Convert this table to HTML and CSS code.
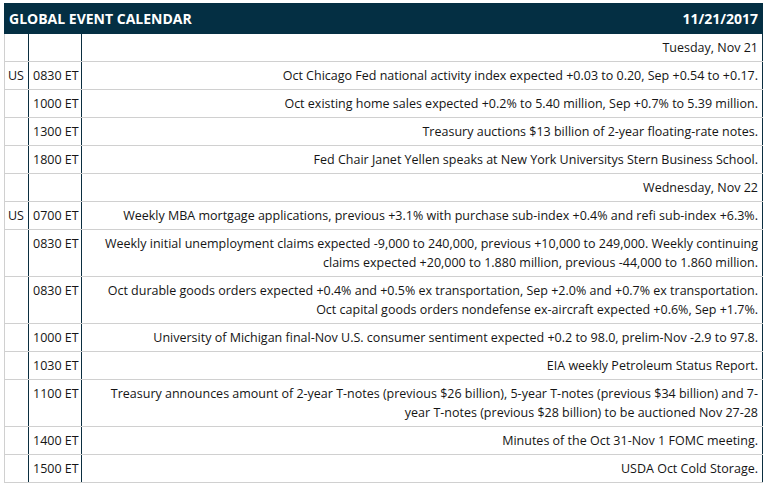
FILE: index.html
```html
<!DOCTYPE html>
<html>
<head>
<meta charset="utf-8">
<link rel="stylesheet" href="styles.css">
</head>
<body>
<div class="cal">
  <div class="cal-head">
    <span class="cal-title">GLOBAL EVENT CALENDAR</span>
    <span class="cal-date">11/21/2017</span>
  </div>
  <table class="cal-table">
    <colgroup><col class="c-country"><col class="c-time"><col class="c-event"></colgroup>
    <tr class="day"><td></td><td></td><td>Tuesday, Nov 21</td></tr>
    <tr><td>US</td><td>0830 ET</td><td>Oct Chicago Fed national activity index expected +0.03 to 0.20, Sep +0.54 to +0.17.</td></tr>
    <tr><td></td><td>1000 ET</td><td>Oct existing home sales expected +0.2% to 5.40 million, Sep +0.7% to 5.39 million.</td></tr>
    <tr><td></td><td>1300 ET</td><td>Treasury auctions $13 billion of 2-year floating-rate notes.</td></tr>
    <tr><td></td><td>1800 ET</td><td>Fed Chair Janet Yellen speaks at New York Universitys Stern Business School.</td></tr>
    <tr class="day"><td></td><td></td><td>Wednesday, Nov 22</td></tr>
    <tr><td>US</td><td>0700 ET</td><td>Weekly MBA mortgage applications, previous +3.1% with purchase sub-index +0.4% and refi sub-index +6.3%.</td></tr>
    <tr><td></td><td>0830 ET</td><td>Weekly initial unemployment claims expected -9,000 to 240,000, previous +10,000 to 249,000. Weekly continuing claims expected +20,000 to 1.880 million, previous -44,000 to 1.860 million.</td></tr>
    <tr><td></td><td>0830 ET</td><td>Oct durable goods orders expected +0.4% and +0.5% ex transportation, Sep +2.0% and +0.7% ex transportation. Oct capital goods orders nondefense ex-aircraft expected +0.6%, Sep +1.7%.</td></tr>
    <tr><td></td><td>1000 ET</td><td>University of Michigan final-Nov U.S. consumer sentiment expected +0.2 to 98.0, prelim-Nov -2.9 to 97.8.</td></tr>
    <tr><td></td><td>1030 ET</td><td>EIA weekly Petroleum Status Report.</td></tr>
    <tr><td></td><td>1100 ET</td><td>Treasury announces amount of 2-year T-notes (previous $26 billion), 5-year T-notes (previous $34 billion) and 7-year T-notes (previous $28 billion) to be auctioned Nov 27-28</td></tr>
    <tr><td></td><td>1400 ET</td><td>Minutes of the Oct 31-Nov 1 FOMC meeting.</td></tr>
    <tr><td></td><td>1500 ET</td><td>USDA Oct Cold Storage.</td></tr>
  </table>
</div>
</body>
</html>
```

FILE: styles.css
```css
html, body {
  margin: 0;
  padding: 0;
  background: #fff;
}
body {
  padding: 3px 0 0 4px;
  font-family: "Open Sans", "Liberation Sans", sans-serif;
  color: #151515;
}
.cal {
  width: 759px;
}
.cal-head {
  display: flex;
  justify-content: space-between;
  align-items: center;
  height: 31px;
  padding: 0 5px 0 5px;
  background: #042f43;
  color: #fff;
  font-weight: 700;
  font-size: 14px;
}
.cal-table {
  width: 759px;
  border-collapse: collapse;
  table-layout: fixed;
  font-size: 12.5px;
  line-height: 19px;
}
.c-country { width: 24px; }
.c-time { width: 53px; }
.cal-table td {
  padding: 4px 4px 4px 4px;
  border-bottom: 1px solid #d0d0d0;
  vertical-align: top;
  text-align: right;
}
.cal-table td:nth-child(1) {
  border-left: 1px solid #d0d0d0;
  border-right: 1px solid #0b2e40;
  padding: 4px 2px 4px 3px;
  text-align: left;
}
.cal-table td:nth-child(2) {
  border-right: 1px solid #0b2e40;
  white-space: nowrap;
}
.cal-table td:nth-child(3) {
  border-right: 1px solid #0b2e40;
}
```
